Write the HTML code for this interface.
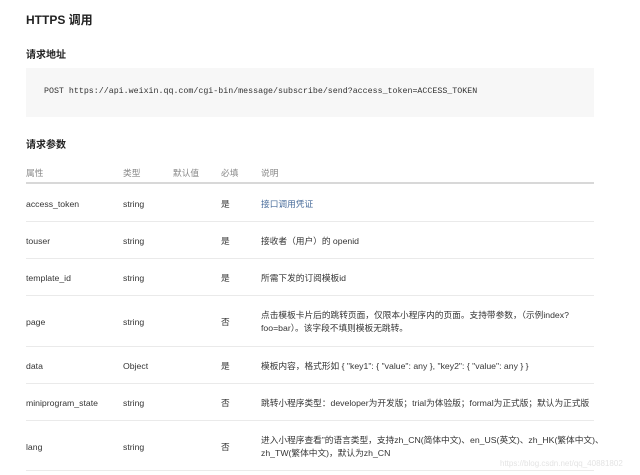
<!DOCTYPE html>
<html><head><meta charset="utf-8"><style>
body{margin:0;width:640px;height:475px;background:#fff;overflow:hidden;font-family:"Liberation Sans","Noto Sans CJK SC",sans-serif;color:#353535;position:relative}
h{position:absolute;font-weight:bold;color:#222}
.code{position:absolute;left:26px;top:68px;width:568px;height:49px;background:#f7f7f7}
.code span{position:absolute;left:18px;top:19px;font:8.3px "Liberation Mono",monospace;color:#333}
.r{position:absolute;left:26px;width:568px;border-top:1px solid #eaeaea}
.t{font-size:8.7px;position:absolute;white-space:nowrap}
.l{margin-top:2px}
</style></head><body>
<h style="left:26px;top:11px;font-size:12px">HTTPS 调用</h>
<h style="left:26px;top:46px;font-size:10px">请求地址</h>
<div class="code"><span>POST https://api.weixin.qq.com/cgi-bin/message/subscribe/send?access_token=ACCESS_TOKEN</span></div>
<h style="left:26px;top:136px;font-size:10px">请求参数</h>
<div class="t" style="left:26px;top:166px;color:#888">属性</div>
<div class="t" style="left:123px;top:166px;color:#888">类型</div>
<div class="t" style="left:173px;top:166px;color:#888">默认值</div>
<div class="t" style="left:221px;top:166px;color:#888">必填</div>
<div class="t" style="left:261px;top:166px;color:#888">说明</div>
<div class="r" style="top:182px;border-top:2px solid #d8d8d8"></div>

<div class="t l" style="left:26px;top:197px">access_token</div><div class="t l" style="left:123px;top:197px">string</div><div class="t" style="left:221px;top:197px">是</div><div class="t" style="left:261px;top:197px;color:#4a6d9b">接口调用凭证</div>
<div class="r" style="top:221px"></div>
<div class="t l" style="left:26px;top:234px">touser</div><div class="t l" style="left:123px;top:234px">string</div><div class="t" style="left:221px;top:234px">是</div><div class="t" style="left:261px;top:234px">接收者（用户）的 openid</div>
<div class="r" style="top:258px"></div>
<div class="t l" style="left:26px;top:271px">template_id</div><div class="t l" style="left:123px;top:271px">string</div><div class="t" style="left:221px;top:271px">是</div><div class="t" style="left:261px;top:271px">所需下发的订阅模板id</div>
<div class="r" style="top:295px"></div>
<div class="t l" style="left:26px;top:315px">page</div><div class="t l" style="left:123px;top:315px">string</div><div class="t" style="left:221px;top:315px">否</div><div class="t" style="left:261px;top:308px">点击模板卡片后的跳转页面，仅限本小程序内的页面。支持带参数，（示例index?</div><div class="t" style="left:261px;top:321px">foo=bar）。该字段不填则模板无跳转。</div>
<div class="r" style="top:346px"></div>
<div class="t l" style="left:26px;top:359px">data</div><div class="t l" style="left:123px;top:359px">Object</div><div class="t" style="left:221px;top:359px">是</div><div class="t" style="left:261px;top:359px">模板内容，格式形如 { "key1": { "value": any }, "key2": { "value": any } }</div>
<div class="r" style="top:383px"></div>
<div class="t l" style="left:26px;top:396px">miniprogram_state</div><div class="t l" style="left:123px;top:396px">string</div><div class="t" style="left:221px;top:396px">否</div><div class="t" style="left:261px;top:396px">跳转小程序类型：developer为开发版；trial为体验版；formal为正式版；默认为正式版</div>
<div class="r" style="top:420px"></div>
<div class="t l" style="left:26px;top:440px">lang</div><div class="t l" style="left:123px;top:440px">string</div><div class="t" style="left:221px;top:440px">否</div><div class="t" style="left:261px;top:433px">进入小程序查看”的语言类型，支持zh_CN(简体中文)、en_US(英文)、zh_HK(繁体中文)、</div><div class="t" style="left:261px;top:446px">zh_TW(繁体中文)，默认为zh_CN</div>
<div class="r" style="top:470px"></div>
<div class="t" style="left:500px;top:459px;font-size:8px;color:#e4e4e4">https://blog.csdn.net/qq_40881802</div>
</body></html>
